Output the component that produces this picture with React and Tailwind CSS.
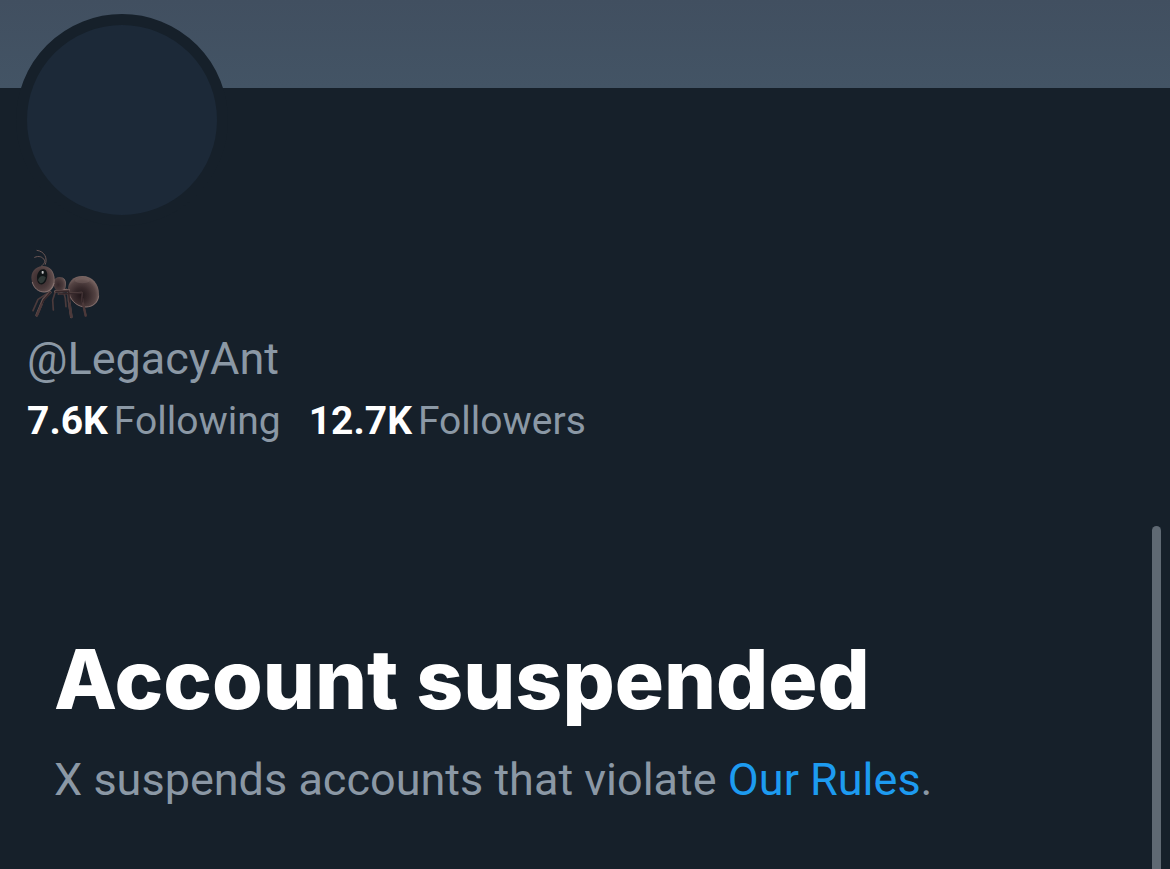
import { clsx } from 'clsx';
import { twMerge } from 'tailwind-merge';

function cn(...inputs) {
  return twMerge(clsx(inputs));
}

const stats = [
  { label: 'Following', value: '7.6K' },
  { label: 'Followers', value: '12.7K' },
];

function AntIcon({ className }) {
  return (
    <svg viewBox="30 21 216 216" className={className} role="img" aria-label="Ant" fill="none" strokeLinecap="round" strokeLinejoin="round">
      <defs>
        <radialGradient id="ant-body" cx="0.4" cy="0.5" r="0.6">
          <stop offset="0" stopColor="#34262a" />
          <stop offset="0.6" stopColor="#4a3a3b" />
          <stop offset="0.88" stopColor="#5e4c4c" />
          <stop offset="1" stopColor="#806d6a" />
        </radialGradient>
        <radialGradient id="ant-abdomen" cx="0.42" cy="0.62" r="0.62">
          <stop offset="0" stopColor="#21171a" />
          <stop offset="0.4" stopColor="#382a2c" />
          <stop offset="0.75" stopColor="#544343" />
          <stop offset="1" stopColor="#7d6966" />
        </radialGradient>
      </defs>

      {/* antennae */}
      <g stroke="#6b5755" strokeWidth="3">
        <path d="M67 79 C75 72 79 66 76 60 C71 51 60 46 47 52" />
        <path d="M79 73 C86 56 78 34 54 31" />
      </g>

      {/* far legs */}
      <g stroke="#4b3a3b" strokeWidth="5">
        <path d="M92 156 L57 178 L42 212" />
        <path d="M108 158 L101 180 L103 210" />
        <path d="M135 160 L139 176 L141 200" />
      </g>

      {/* abdomen */}
      <path d="M147 151 C146 126 163 108 190 108 C220 108 240 132 240 163 C240 188 224 202 200 202 C174 202 149 182 147 151 Z" fill="url(#ant-abdomen)" />
      <path d="M150 162 C159 187 178 201 201 201 C222 200 237 188 239 168" stroke="#8b7673" strokeWidth="2.5" />
      <ellipse cx="190" cy="122" rx="22" ry="8" fill="#8b7774" opacity="0.3" />

      {/* thorax */}
      <path d="M102 126 C107 110 127 106 137 118 C144 127 141 147 132 157 C119 162 105 151 102 126 Z" fill="url(#ant-body)" />
      <path d="M131 153 C137 147 143 147 151 151" stroke="#a38b86" strokeWidth="4" />

      {/* near legs */}
      <g stroke="#6a5553" strokeWidth="8">
        <path d="M94 157 L73 178 L53 226" />
        <path d="M109 154 L130 153 L149 151 L150 182 L157 231" />
        <path d="M118 162 L188 158 L191 187 L200 226" strokeWidth="5" />
      </g>
      <g stroke="#35272a" strokeWidth="5">
        <path d="M94 158 L74 180 L54 226" />
        <path d="M111 155 L149 153 L151 183 L157 230" />
        <path d="M120 162 L188 159 L191 187 L200 226" />
      </g>
      <path d="M54 226 L68 193 M150 190 L157 230 M192 190 L200 227" stroke="#4c393a" strokeWidth="7" />

      {/* head */}
      <path d="M38 121 C34 97 48 80 70 78 C92 77 107 94 107 119 C107 143 94 158 76 157 C55 156 41 141 38 121 Z" fill="url(#ant-body)" />
      <path d="M40 127 C45 145 58 156 76 156 C91 155 101 145 105 130" stroke="#8f7a77" strokeWidth="2.5" />
      <path d="M54 112 C55 96 64 86 75 88 C85 91 87 105 83 117 C79 131 70 136 62 132 C56 129 54 122 54 112 Z" fill="#101517" />
      <path d="M57 121 C60 108 71 104 80 112 C78 124 70 132 63 129 Z" fill="#2f3937" />
      <rect x="68" y="93" width="6" height="8" rx="2" fill="#c4c6c7" />
    </svg>
  );
}

function ProfileHeader() {
  return (
    <header>
      <div className="h-22 bg-linear-to-b from-[#414f60] to-[#435465]" />
      <div className="pl-4">
        <div className="-mt-[74px] size-[212px] rounded-full border-11 border-[#16202a] bg-[#1c2938]" />
      </div>
      <div className="px-[27px] pt-[21px]">
        <h2>
          <AntIcon className="ml-0.5 size-[72px]" />
        </h2>
        <p className="mt-3 text-[45px] leading-14 text-[#8b98a5]">@LegacyAnt</p>
        <div className="mt-1.5 flex flex-wrap gap-x-7 text-[39px] leading-14">
          {stats.map(stat => (
            <a key={stat.label} href={`#${stat.label.toLowerCase()}`} className="flex gap-1.5 text-[#8b98a5]">
              <span className="font-bold text-white">{stat.value}</span>
              <span>{stat.label}</span>
            </a>
          ))}
        </div>
      </div>
    </header>
  );
}

function SuspendedNotice({ className }) {
  return (
    <main className={cn('px-[54px]', className)}>
      <h1 className="font-['Inter',sans-serif] text-[82px] leading-24 font-extrabold text-white">Account suspended</h1>
      <p className="mt-6 text-[45px] leading-14 text-[#8b98a5]">
        X suspends accounts that violate{' '}
        <a href="#rules" className="text-[#1d9bf0]">Our Rules</a>.
      </p>
    </main>
  );
}

export default function App() {
  return (
    <div className="relative min-h-screen overflow-hidden bg-[#16202a] font-['Roboto',sans-serif]">
      <ProfileHeader />
      <SuspendedNotice className="mt-[183px]" />
      <div className="absolute top-[526px] right-[9px] bottom-0 w-[9px] rounded-t-full bg-[#5f6973]" />
    </div>
  );
}
